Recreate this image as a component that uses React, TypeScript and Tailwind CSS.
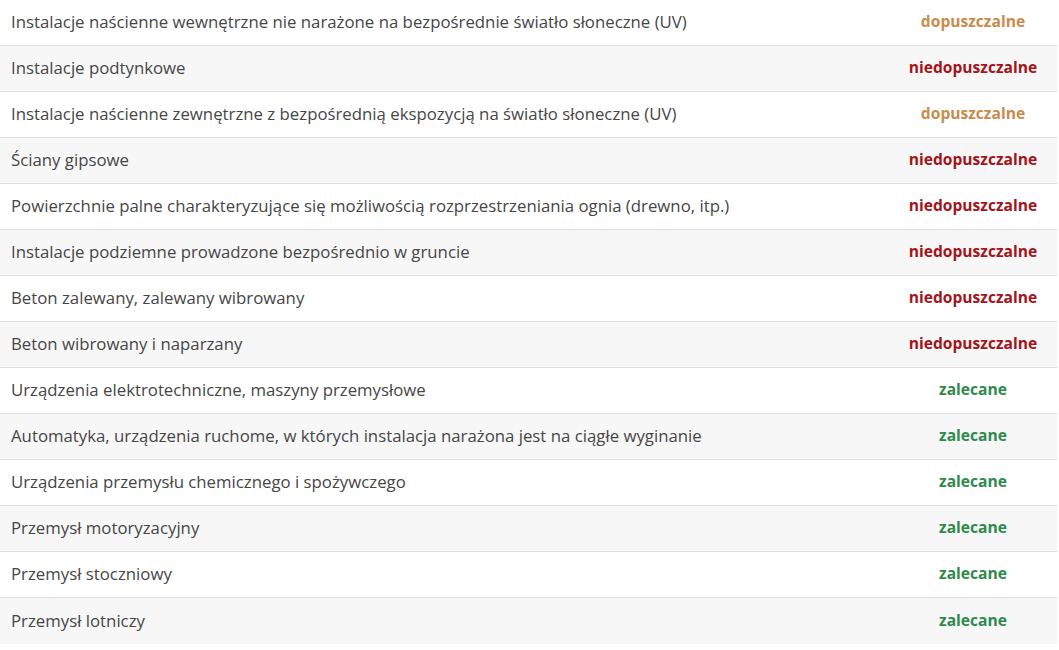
import React from "react";

type Kind = "d" | "n" | "z";
const rows: [string, Kind][] = [
  ["Instalacje naścienne wewnętrzne nie narażone na bezpośrednie światło słoneczne (UV)", "d"],
  ["Instalacje podtynkowe", "n"],
  ["Instalacje naścienne zewnętrzne z bezpośrednią ekspozycją na światło słoneczne (UV)", "d"],
  ["Ściany gipsowe", "n"],
  ["Powierzchnie palne charakteryzujące się możliwością rozprzestrzeniania ognia (drewno, itp.)", "n"],
  ["Instalacje podziemne prowadzone bezpośrednio w gruncie", "n"],
  ["Beton zalewany, zalewany wibrowany", "n"],
  ["Beton wibrowany i naparzany", "n"],
  ["Urządzenia elektrotechniczne, maszyny przemysłowe", "z"],
  ["Automatyka, urządzenia ruchome, w których instalacja narażona jest na ciągłe wyginanie", "z"],
  ["Urządzenia przemysłu chemicznego i spożywczego", "z"],
  ["Przemysł motoryzacyjny", "z"],
  ["Przemysł stoczniowy", "z"],
  ["Przemysł lotniczy", "z"],
];

const label: Record<Kind, string> = { d: "dopuszczalne", n: "niedopuszczalne", z: "zalecane" };
const color: Record<Kind, string> = {
  d: "text-[#c98c4c]",
  n: "text-[#a3141b]",
  z: "text-[#2f8a4c]",
};

export default function App() {
  return (
    <div className="w-[1057px] bg-white" style={{ fontFamily: '"Open Sans", sans-serif' }}>
      {rows.map(([t, k], i) => (
        <div
          key={i}
          className={`flex h-[46px] items-center ${i < rows.length - 1 ? "border-b border-[#dedede]" : ""} ${i % 2 === 1 ? "bg-[#f7f7f7]" : "bg-white"}`}
        >
          <div className="flex-1 pl-[11px] text-[16.8px] text-[#464646] pb-[1px]">{t}</div>
          <div className={`w-[168px] text-center text-[15.6px] font-bold pb-[1px] ${color[k]}`}>{label[k]}</div>
        </div>
      ))}
    </div>
  );
}
